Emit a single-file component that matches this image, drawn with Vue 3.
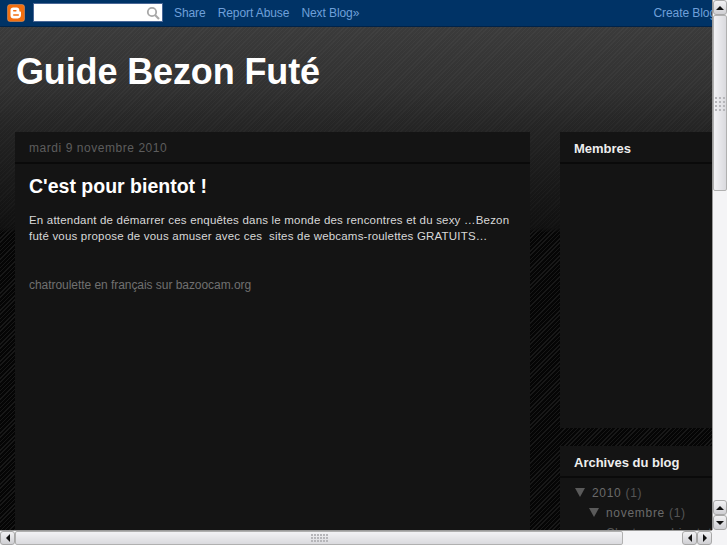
<script setup>
const navLinks = ['Share', 'Report Abuse', 'Next Blog»']
</script>

<template>
  <div class="window">
    <div class="viewport">
      <nav class="navbar">
        <div class="logo">
          <svg width="18" height="18" viewBox="0 0 18 18">
            <rect x="0.5" y="0.5" width="17" height="17" rx="2.5" fill="#f26f0f" stroke="#e9a06b" stroke-width="0.5" />
            <path d="M6.2 3.6h3.6c1.5 0 2.5 1 2.5 2.4v.9c0 .4.3.6.7.6.6 0 1 .4 1 1v2.6c0 2-1.300 3.300-3.200 3.300H6.500c-1.800 0-3-1.200-3-3V6.300c0-1.600 1.100-2.700 2.700-2.700z" fill="#fff" />
            <rect x="6" y="6" width="3.600" height="1.400" rx="0.700" fill="#f26f0f" />
            <rect x="6" y="10.300" width="6" height="1.400" rx="0.700" fill="#f26f0f" />
          </svg>
        </div>
        <div class="search">
          <svg width="14" height="14" viewBox="0 0 14 14">
            <circle cx="6" cy="6" r="4.200" fill="none" stroke="#a8a8a8" stroke-width="1.800" />
            <path d="M9 9l4 4" stroke="#a8a8a8" stroke-width="2.200" />
          </svg>
        </div>
        <a v-for="link in navLinks" :key="link" class="nav-link">{{ link }}</a>
        <a class="nav-link create">Create Blog</a>
      </nav>

      <div class="page">
        <header class="title-band">
          <h1>Guide Bezon Futé</h1>
        </header>
        <div class="columns">
          <main class="post-col">
            <h2 class="date">mardi 9 novembre 2010</h2>
            <article class="post">
              <h3>C'est pour bientot !</h3>
              <p class="body">En attendant de démarrer ces enquêtes dans le monde des rencontres et du sexy …Bezon futé vous propose de vous amuser avec ces&nbsp; sites de webcams-roulettes GRATUITS…</p>
              <p class="link-line">chatroulette en français sur bazoocam.org</p>
            </article>
          </main>
          <aside class="side-col">
            <section class="widget members">
              <h2>Membres</h2>
            </section>
            <section class="widget archive">
              <h2>Archives du blog</h2>
              <ul>
                <li class="lvl1"><i class="tri"></i><span class="lnk">2010</span> <span>(1)</span></li>
                <li class="lvl2"><i class="tri"></i><span class="lnk">novembre</span> <span>(1)</span></li>
                <li class="lvl3">C'est pour bientot !</li>
              </ul>
            </section>
          </aside>
        </div>
      </div>
    </div>

    <div class="vbar">
      <button class="btn"><i class="tri-up"></i></button>
      <div class="track">
        <div class="thumb-v">
          <div class="grip grip-v"><b v-for="n in 12" :key="n"></b></div>
        </div>
      </div>
      <button class="btn"><i class="tri-up"></i></button>
      <button class="btn"><i class="tri-down"></i></button>
    </div>

    <div class="hbar">
      <button class="btn"><i class="tri-left"></i></button>
      <div class="thumb-h">
        <div class="grip grip-h"><b v-for="n in 18" :key="n"></b></div>
      </div>
      <div class="track-h"></div>
      <button class="btn"><i class="tri-left"></i></button>
      <button class="btn"><i class="tri-right"></i></button>
    </div>
    <div class="corner"></div>
  </div>
</template>

<style>
html, body { margin: 0; background: #000; overflow: hidden; }
</style>

<style scoped>
.window {
  width: 727px;
  height: 545px;
  display: grid;
  grid-template-columns: 712px 15px;
  grid-template-rows: 530px 15px;
  overflow: hidden;
  font-family: "Liberation Sans", Arial, sans-serif;
}
.viewport {
  overflow: hidden;
  background-color: #000;
  background-image: repeating-linear-gradient(135deg, #181818 0 1px, #050505 1px 3px);
  display: flex;
  flex-direction: column;
}
.navbar {
  flex: none;
  height: 27px;
  box-sizing: border-box;
  background: #003366;
  border-bottom: 1px solid #00234a;
  display: flex;
  align-items: center;
  padding: 0 0 1px 7px;
  white-space: nowrap;
  overflow: hidden;
}
.logo { width: 18px; height: 18px; display: flex; }
.search {
  width: 130px;
  height: 19px;
  box-sizing: border-box;
  margin-left: 8px;
  margin-right: 11px;
  background: #fff;
  border: 1px solid #4a6796;
  display: flex;
  align-items: center;
  justify-content: flex-end;
  padding-right: 2px;
}
.nav-link {
  font-size: 12px;
  letter-spacing: -0.08px;
  color: #6fa0da;
  margin-right: 12px;
}
.create { margin-left: auto; margin-right: -4px; }
.page {
  flex: 1;
  min-height: 0;
  background-image:
    repeating-linear-gradient(135deg, rgba(255,255,255,.02) 0 1px, rgba(0,0,0,.04) 1px 3px),
    linear-gradient(180deg, #3d3d3d 0, #333 60px, #242424 105px, #111 200px, rgba(0,0,0,0) 205px);
  background-repeat: no-repeat;
  background-size: 100% 205px;
}
.title-band { height: 105px; box-sizing: border-box; padding: 22px 0 0 16px; }
h1 {
  margin: 0;
  font-size: 36px;
  line-height: 46px;
  letter-spacing: -0.13px;
  font-weight: 700;
  color: #fff;
}
.columns { display: flex; align-items: flex-start; padding-left: 15px; }
.post-col { width: 515px; flex: none; background: #141414; height: 420px; }
.date {
  margin: 0;
  height: 32px;
  box-sizing: border-box;
  padding: 9px 14px 0;
  font-size: 12px;
  line-height: 15px;
  font-weight: 400;
  letter-spacing: 0.55px;
  color: #5d5d5d;
  background: #141414;
  border-bottom: 2px solid #0a0a0a;
}
.post { padding: 8px 14px 0; }
h3 {
  margin: 0;
  font-size: 19.5px;
  line-height: 28px;
  font-weight: 700;
  color: #fff;
}
.body {
  margin: 12px 0 0;
  font-size: 11.5px;
  line-height: 16px;
  letter-spacing: 0.2px;
  color: #d8d8d8;
}
.link-line {
  margin: 33px 0 0;
  font-size: 12px;
  line-height: 16px;
  letter-spacing: -0.05px;
  color: #707070;
}
.side-col { margin-left: 30px; width: 152px; flex: none; display: flex; flex-direction: column; gap: 18px; }
.widget { background: #141414; }
.widget h2 {
  margin: 0;
  box-sizing: border-box;
  height: 32px;
  padding: 9px 14px 0;
  font-size: 13px;
  line-height: 16px;
  font-weight: 700;
  color: #eee;
  border-bottom: 2px solid #0a0a0a;
}
.members { height: 296px; }
.archive { height: 120px; }
.archive ul { list-style: none; margin: 0; padding: 5px 0 0 15px; font-size: 12px; line-height: 20px; letter-spacing: 0.7px; color: #555; white-space: nowrap; }
.lnk { color: #6a6a6a; }
.tri {
  display: inline-block;
  width: 0;
  height: 0;
  margin-right: 7px;
  border-style: solid;
  border-width: 9px 5px 0;
  border-color: #5a5a5a transparent transparent;
}
.lvl2 { padding-left: 14px; }
.lvl3 { padding-left: 31px; }

.vbar, .hbar { background: #f4f4f6; display: flex; }
.vbar { flex-direction: column; border-left: 1px solid #9a9a9a; box-sizing: border-box; }
.hbar { border-top: 1px solid #9a9a9a; box-sizing: border-box; }
.btn {
  flex: none;
  width: 14px;
  height: 15px;
  padding: 0;
  border: 1px solid #a8a8a8;
  border-radius: 3px;
  background: linear-gradient(#f2f2f4, #cfcfd3);
  display: flex;
  align-items: center;
  justify-content: center;
}
.hbar .btn { height: 14px; width: 15px; }
.track { flex: 1; display: flex; flex-direction: column; }
.thumb-v {
  height: 176px;
  margin-bottom: auto;
  box-sizing: border-box;
  background: linear-gradient(90deg, #f2f2f5, #dadade);
  border: 1px solid #b0b0b0;
  border-radius: 2px;
  display: flex;
  align-items: center;
  justify-content: center;
  padding-top: 2px;
}
.thumb-h {
  width: 608px;
  box-sizing: border-box;
  background: linear-gradient(#f2f2f5, #dadade);
  border: 1px solid #b0b0b0;
  border-radius: 2px;
  display: flex;
  align-items: center;
  justify-content: center;
}
.track-h { flex: 1; }
.grip { display: grid; gap: 1px; }
.grip b { width: 2px; height: 2px; background: #b6b6ba; }
.grip-v { grid-template-columns: repeat(3, 2px); gap: 2px 2px; }
.grip-h { grid-template-columns: repeat(6, 2px); gap: 1px 1px; }
.corner { background: #f4f4f6; }

.tri-up, .tri-down, .tri-left, .tri-right { width: 0; height: 0; display: block; border-style: solid; border-color: transparent; }
.tri-up { border-width: 0 4px 4px; border-bottom-color: #111; }
.tri-down { border-width: 4px 4px 0; border-top-color: #111; }
.tri-left { border-width: 4px 4px 4px 0; border-right-color: #111; }
.tri-right { border-width: 4px 0 4px 4px; border-left-color: #111; }
</style>
